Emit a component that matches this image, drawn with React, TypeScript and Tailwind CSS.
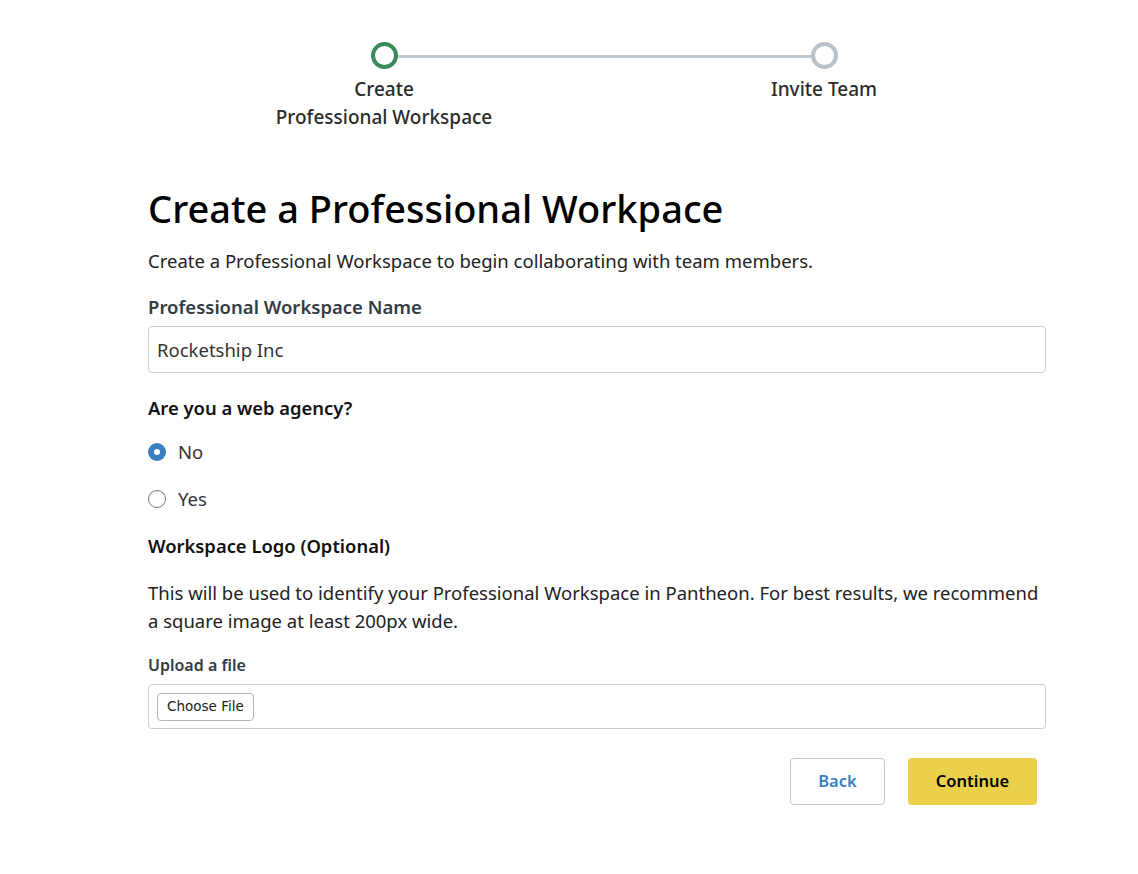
import React, { useState } from 'react';

const Step: React.FC<{ active?: boolean; children: React.ReactNode }> = ({ active, children }) => (
  <div className="flex flex-col items-center w-[240px]">
    <div
      className={`w-[27px] h-[27px] rounded-full border-[4px] bg-white relative z-10 ${
        active ? 'border-[#3a8a5a]' : 'border-[#b8c2cb]'
      }`}
    />
    <div className="mt-[6px] text-[19px] leading-[28px] font-medium text-[#2b2b2b] text-center">{children}</div>
  </div>
);

const Radio: React.FC<{ checked: boolean; label: string; onClick: () => void }> = ({ checked, label, onClick }) => (
  <label className="flex items-center gap-[12px] h-[28px] cursor-pointer" onClick={onClick}>
    <span
      className={`w-[18px] h-[18px] rounded-full flex items-center justify-center ${
        checked ? 'bg-[#3a7fc1]' : 'border border-[#6b7785] bg-white'
      }`}
    >
      {checked && <span className="w-[6px] h-[6px] rounded-full bg-white" />}
    </span>
    <span className="text-[18.5px] leading-[28px] text-[#333]">{label}</span>
  </label>
);

export default function App() {
  const [agency, setAgency] = useState('no');

  return (
    <div className="min-h-screen bg-white font-['Noto_Sans',sans-serif] text-[#222]">
      <div className="relative flex justify-between w-[680px] ml-[264px] pt-[42px]">
        <div className="absolute top-[55px] left-[120px] right-[120px] h-[3px] bg-[#c3cbd2]" />
        <Step active>
          Create
          <br />
          Professional Workspace
        </Step>
        <Step>Invite Team</Step>
      </div>

      <div className="w-[898px] ml-[148px] mt-[53px]">
        <h1 className="text-[38px] leading-[48px] font-medium text-black">Create a Professional Workpace</h1>
        <p className="mt-[15px] text-[18.5px] leading-[28px] text-[#222]">
          Create a Professional Workspace to begin collaborating with team members.
        </p>

        <div className="mt-[18px] text-[18.5px] leading-[28px] font-semibold text-[#333b44]">Professional Workspace Name</div>
        <div className="mt-[5px] h-[47px] border border-[#c5cdd5] rounded-[4px] flex items-center px-[8px] text-[18.5px] text-[#333]">
          Rocketship Inc
        </div>

        <div className="mt-[21px] text-[18.4px] leading-[28px] font-semibold text-[#111]">Are you a web agency?</div>
        <div className="mt-[16px] flex flex-col gap-[19px]">
          <Radio checked={agency === 'no'} label="No" onClick={() => setAgency('no')} />
          <Radio checked={agency === 'yes'} label="Yes" onClick={() => setAgency('yes')} />
        </div>

        <div className="mt-[19px] text-[18.4px] leading-[28px] font-semibold text-[#111]">Workspace Logo (Optional)</div>
        <p className="mt-[19px] text-[18.5px] leading-[28px] text-[#222]">
          This will be used to identify your Professional Workspace in Pantheon. For best results, we recommend a square
          image at least 200px wide.
        </p>

        <div className="mt-[18px] text-[16px] leading-[24px] font-semibold text-[#333b44]">Upload a file</div>
        <div className="mt-[7px] h-[45px] border border-[#c5cdd5] rounded-[4px] flex items-center px-[8px]">
          <button className="h-[28px] px-[9px] border border-[#b5b5b5] rounded-[4px] bg-white text-[13.5px] text-[#222] font-['DejaVu_Sans',sans-serif]">
            Choose File
          </button>
        </div>

        <div className="mt-[29px] flex justify-end gap-[23px] pr-[9px]">
          <button className="w-[95px] h-[47px] border border-[#bccad6] rounded-[4px] bg-white text-[#3a7fc1] text-[16.5px] font-semibold">
            Back
          </button>
          <button className="w-[129px] h-[47px] rounded-[4px] bg-[#ebd14b] text-black text-[16.5px] font-semibold">
            Continue
          </button>
        </div>
      </div>
    </div>
  );
}
